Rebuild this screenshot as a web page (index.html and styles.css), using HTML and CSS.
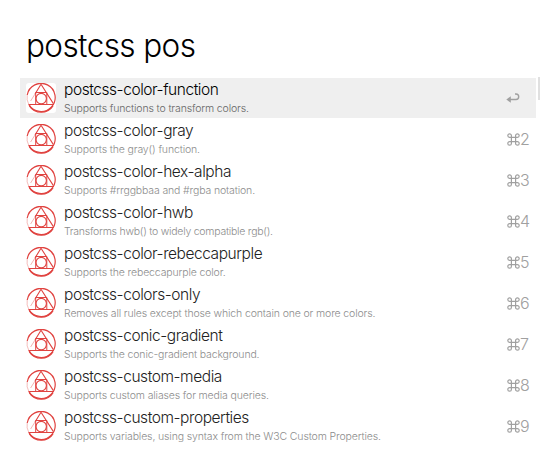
FILE: index.html
```html
<!DOCTYPE html>
<html lang="en">
<head>
<meta charset="utf-8">
<title>Launcher</title>
<link rel="stylesheet" href="styles.css">
</head>
<body>
<svg width="0" height="0" class="defs" aria-hidden="true">
  <symbol id="logo" viewBox="0 0 30 30">
    <path d="M1.2 12A14.1 14.1 0 1 1 2.8 21.4" stroke-width="1.2"/>
    <path d="M2.8 21.4A14.1 14.1 0 0 1 1.2 12" stroke-width="1" opacity=".35"/>
    <path d="M3.4 22.8A14.1 14.1 0 0 0 27 22.8" stroke-width="1.2"/>
    <circle cx="15.2" cy="15.6" r="5.2" stroke-width="1.1"/>
    <path d="M9.7 21.5V9.5H20.8V21.5" stroke-width="1"/>
    <path d="M2.6 21.5H27.8" stroke-width="1"/>
    <path d="M15 1.2L9 11M15 1.2L27.4 20.6" stroke-width="1.1"/>
    <path d="M9 11L4.6 18" stroke-width="1" opacity=".4"/>
  </symbol>
  <symbol id="cmd" viewBox="0 0 13 13">
    <path d="M4.4 4.4V2.6A1.8 1.8 0 1 0 2.6 4.4H10.4A1.8 1.8 0 1 0 8.6 2.6V10.4A1.8 1.8 0 1 0 10.4 8.6H2.6A1.8 1.8 0 1 0 4.4 10.4Z"/>
  </symbol>
</svg>
<main class="launcher">
  <div class="query">postcss pos</div>
  <div class="panel">
    <ul class="results">
      <li class="row selected"><svg class="logo"><use href="#logo"/></svg><div class="text"><div class="name">postcss-color-function</div><div class="sub">Supports functions to transform colors.</div></div><div class="key"><svg class="enter" viewBox="0 0 14 12"><path d="M4 7.5H10Q12.7 7.5 12.7 4.8Q12.7 2 10 2H9"/><path class="head" d="M.3 7.5L4.8 4.2V10.8Z"/></svg></div></li>
      <li class="row"><svg class="logo"><use href="#logo"/></svg><div class="text"><div class="name">postcss-color-gray</div><div class="sub">Supports the gray() function.</div></div><div class="key"><svg class="cmd"><use href="#cmd"/></svg>2</div></li>
      <li class="row"><svg class="logo"><use href="#logo"/></svg><div class="text"><div class="name">postcss-color-hex-alpha</div><div class="sub">Supports #rrggbbaa and #rgba notation.</div></div><div class="key"><svg class="cmd"><use href="#cmd"/></svg>3</div></li>
      <li class="row"><svg class="logo"><use href="#logo"/></svg><div class="text"><div class="name">postcss-color-hwb</div><div class="sub tight">Transforms hwb() to widely compatible rgb().</div></div><div class="key"><svg class="cmd"><use href="#cmd"/></svg>4</div></li>
      <li class="row"><svg class="logo"><use href="#logo"/></svg><div class="text"><div class="name">postcss-color-rebeccapurple</div><div class="sub">Supports the rebeccapurple color.</div></div><div class="key"><svg class="cmd"><use href="#cmd"/></svg>5</div></li>
      <li class="row"><svg class="logo"><use href="#logo"/></svg><div class="text"><div class="name">postcss-colors-only</div><div class="sub">Removes all rules except those which contain one or more colors.</div></div><div class="key"><svg class="cmd"><use href="#cmd"/></svg>6</div></li>
      <li class="row"><svg class="logo"><use href="#logo"/></svg><div class="text"><div class="name">postcss-conic-gradient</div><div class="sub">Supports the conic-gradient background.</div></div><div class="key"><svg class="cmd"><use href="#cmd"/></svg>7</div></li>
      <li class="row"><svg class="logo"><use href="#logo"/></svg><div class="text"><div class="name">postcss-custom-media</div><div class="sub">Supports custom aliases for media queries.</div></div><div class="key"><svg class="cmd"><use href="#cmd"/></svg>8</div></li>
      <li class="row"><svg class="logo"><use href="#logo"/></svg><div class="text"><div class="name">postcss-custom-properties</div><div class="sub">Supports variables, using syntax from the W3C Custom Properties.</div></div><div class="key"><svg class="cmd"><use href="#cmd"/></svg>9</div></li>
    </ul>
    <div class="scrollbar"></div>
  </div>
</main>
</body>
</html>
```
FILE: styles.css
```css
* { box-sizing: border-box; margin: 0; padding: 0; }
body {
  width: 560px;
  height: 467px;
  overflow: hidden;
  background: #fff;
  font-family: Inter, "Liberation Sans", sans-serif;
  font-weight: 300;
}
.defs { display: block; }
.launcher { padding: 20px 20px 0; }
.query {
  height: 58px;
  padding-left: 6px;
  font-size: 31.5px;
  line-height: 52px;
  letter-spacing: -0.6px;
  color: #000;
}
.panel { display: flex; gap: 2px; }
.results { width: 516px; list-style: none; display: grid; gap: 1px; }
.row {
  display: flex;
  align-items: center;
  height: 40px;
  padding: 0 5px 0 6px;
  color: #222;
}
.selected { background: #efefef; color: #000; }
.logo {
  width: 30px;
  height: 30px;
  border-radius: 3px;
  background: #fff;
  fill: none;
  stroke: #e04340;
}
.text { flex: 1; margin-left: 8px; padding-top: 2px; white-space: nowrap; }
.name { font-size: 15.5px; line-height: 20px; height: 21px; letter-spacing: -0.44px; }
.sub { font-size: 10.5px; line-height: 16px; height: 17px; letter-spacing: -0.14px; color: #8c8c8c; }
.tight { letter-spacing: -0.25px; }
.selected .sub { color: #666; }
.key {
  width: 25px;
  padding-left: 1px;
  display: flex;
  align-items: center;
  font-size: 16px;
  line-height: 20px;
  color: #a0a0a0;
}
.cmd { flex: none; width: 13px; height: 13px; fill: none; stroke: #a0a0a0; stroke-width: 1.2; }
.enter { margin-left: -1px; width: 14px; height: 12px; fill: none; stroke: #a0a0a0; stroke-width: 1.4; }
.head { fill: #a0a0a0; stroke: none; }
.scrollbar { width: 2px; height: 23px; margin-top: -1px; background: #e0e0e0; }
```
